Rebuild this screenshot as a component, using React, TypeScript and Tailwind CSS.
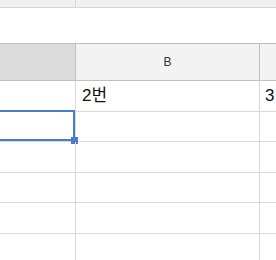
const rows = [
  { h: "h-[31px]", b: "2번", c: "3" },
  { h: "h-[30px]", b: "", c: "", selected: true },
  { h: "h-[31px]", b: "", c: "" },
  { h: "h-[30px]", b: "", c: "" },
  { h: "h-[31px]", b: "", c: "" },
  { h: "h-[30px]", b: "", c: "" },
];

export default function App() {
  return (
    <div className="w-[276px] h-[260px] overflow-hidden bg-white font-['Liberation_Sans','Noto_Sans_CJK_KR',sans-serif] text-[#111]">
      {/* top strip */}
      <div className="flex h-[8px] bg-[#f1f1f1] border-b border-[#d6d6d6]">
        <div className="w-[76px] border-r border-[#d6d6d6]" />
        <div className="flex-1" />
      </div>

      <div className="h-[35px]" />

      {/* column headers */}
      <div className="flex h-[38px] border-y border-[#c0c0c0]">
        <div className="w-[76px] bg-[#dcdcdc] border-r border-[#c0c0c0]" />
        <div className="w-[184px] bg-[#f3f3f3] border-r border-[#c0c0c0] flex items-center justify-center text-[12px] text-[#333]">
          B
        </div>
        <div className="flex-1 bg-[#f3f3f3]" />
      </div>

      {/* rows */}
      {rows.map((r, i) => (
        <div key={i} className={`flex ${r.h} border-b border-[#d9d9d9]`}>
          <div className="relative w-[76px] border-r border-[#d9d9d9]">
            {r.selected && (
              <div className="absolute -left-[4px] -top-[2px] w-[79px] h-[31px] border-2 border-[#4a7bd0]">
                <div className="absolute -right-[5px] -bottom-[5px] w-[7px] h-[7px] bg-[#4a7bd0]" />
              </div>
            )}
          </div>
          <div className="w-[184px] border-r border-[#d9d9d9] flex items-center pl-[6px] text-[17px]">
            {r.b}
          </div>
          <div className="flex-1 flex items-center pl-[5px] text-[17px]">{r.c}</div>
        </div>
      ))}
    </div>
  );
}
